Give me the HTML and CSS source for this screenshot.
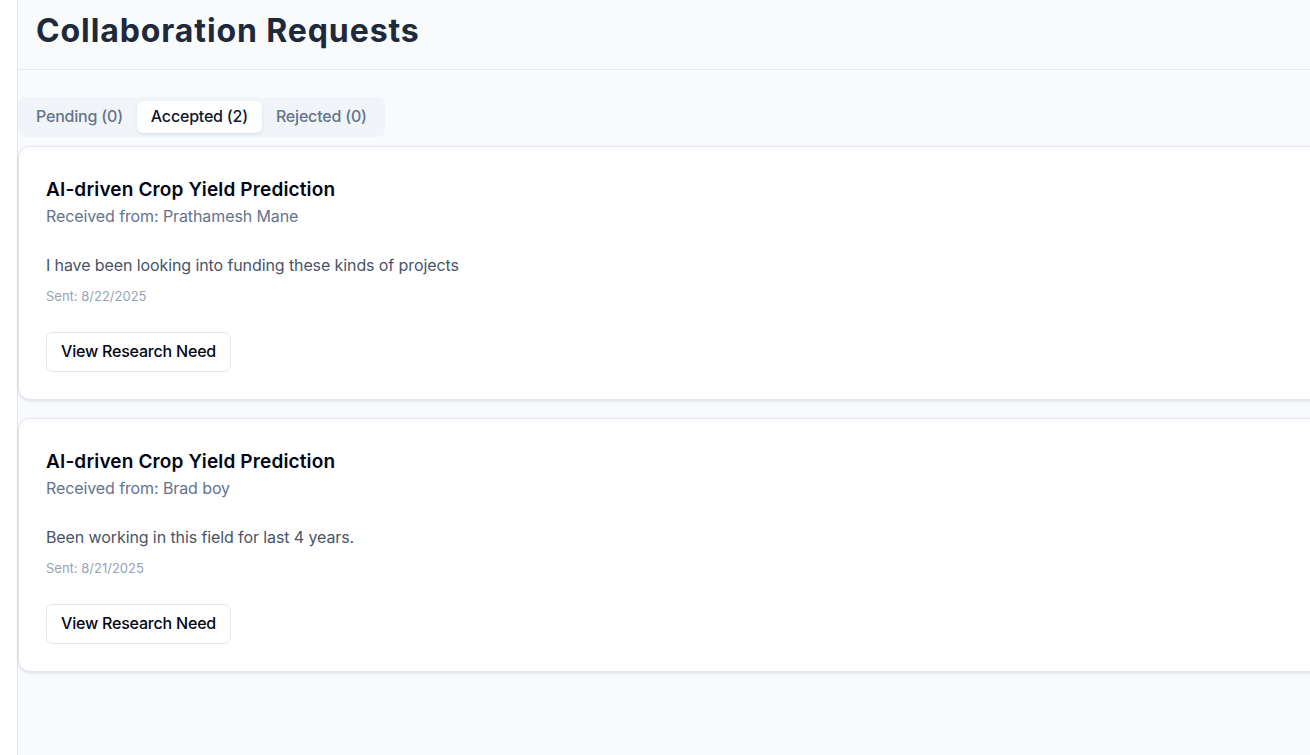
FILE: index.html
```html
<!DOCTYPE html>
<html lang="en">
<head>
<meta charset="utf-8">
<title>Collaboration Requests</title>
<link rel="stylesheet" href="styles.css">
</head>
<body>
<div class="layout">
  <aside class="sidebar"></aside>
  <main class="main">
    <header class="page-header">
      <h1 class="page-title">Collaboration Requests</h1>
    </header>
    <section class="content">
      <div class="tabs">
        <button class="tab">Pending (0)</button>
        <button class="tab tab-active">Accepted (2)</button>
        <button class="tab">Rejected (0)</button>
      </div>
      <div class="cards">
        <article class="card">
          <h2 class="card-title">AI-driven Crop Yield Prediction</h2>
          <p class="card-from">Received from: Prathamesh Mane</p>
          <p class="card-msg">I have been looking into funding these kinds of projects</p>
          <p class="card-date">Sent: 8/22/2025</p>
          <button class="btn">View Research Need</button>
        </article>
        <article class="card">
          <h2 class="card-title">AI-driven Crop Yield Prediction</h2>
          <p class="card-from">Received from: Brad boy</p>
          <p class="card-msg">Been working in this field for last 4 years.</p>
          <p class="card-date">Sent: 8/21/2025</p>
          <button class="btn">View Research Need</button>
        </article>
      </div>
    </section>
  </main>
</div>
</body>
</html>
```
FILE: styles.css
```css
* { box-sizing: border-box; }
html, body { margin: 0; padding: 0; height: 100%; overflow: hidden; }
body {
  font-family: Inter, "Noto Sans", sans-serif;
  background: #ffffff;
  color: #0f172a;
}
.layout { display: flex; height: 100%; }
.sidebar {
  width: 18px;
  flex: 0 0 18px;
  background: #ffffff;
  border-right: 1px solid #e2e8f0;
}
.main {
  flex: 0 0 1400px;
  background: #f8fafc;
  display: flex;
  flex-direction: column;
}
.page-header {
  height: 70px;
  border-bottom: 1px solid #e2e8f0;
  padding: 0 18px;
  display: flex;
  align-items: center;
}
.page-title {
  margin: 0;
  font-size: 32px;
  font-weight: 700;
  letter-spacing: 0.9px;
  color: #1e293b;
  line-height: 1;
  position: relative;
  top: -4px;
}
.content { padding-top: 27px; }
.tabs {
  display: inline-flex;
  background: #f1f5f9;
  border-radius: 8px;
  padding: 4px;
  height: 40px;
}
.tab {
  font-family: inherit;
  font-size: 16px;
  font-weight: 500;
  letter-spacing: -0.2px;
  color: #64748b;
  background: transparent;
  border: 0;
  padding: 0 14px 2px;
  height: 32px;
  border-radius: 6px;
  cursor: pointer;
}
.tab-active {
  background: #ffffff;
  color: #0f172a;
  box-shadow: 0 1px 3px rgba(15, 23, 42, 0.12);
}
.cards {
  display: flex;
  flex-direction: column;
  gap: 18px;
  margin-top: 9px;
}
.card {
  background: #ffffff;
  border: 1px solid #e2e8f0;
  border-radius: 12px;
  box-shadow: 0 1px 3px rgba(15, 23, 42, 0.12);
  padding: 29px 27px 27px;
}
.card-title {
  margin: 0;
  font-size: 19px;
  letter-spacing: 0.15px;
  line-height: 28px;
  font-weight: 600;
  color: #020617;
}
.card-from {
  margin: 0;
  font-size: 16px;
  letter-spacing: -0.1px;
  line-height: 24px;
  color: #64748b;
}
.card-msg {
  margin: 25px 0 0;
  font-size: 16px;
  letter-spacing: -0.1px;
  line-height: 24px;
  color: #475569;
}
.card-date {
  margin: 9px 0 0;
  font-size: 13px;
  line-height: 20px;
  color: #94a3b8;
}
.btn {
  display: block;
  margin-top: 26px;
  height: 40px;
  padding: 0 14px 2px;
  font-family: inherit;
  font-size: 16px;
  font-weight: 500;
  letter-spacing: -0.2px;
  color: #020617;
  background: #ffffff;
  border: 1px solid #e2e8f0;
  border-radius: 6px;
  cursor: pointer;
}
```
